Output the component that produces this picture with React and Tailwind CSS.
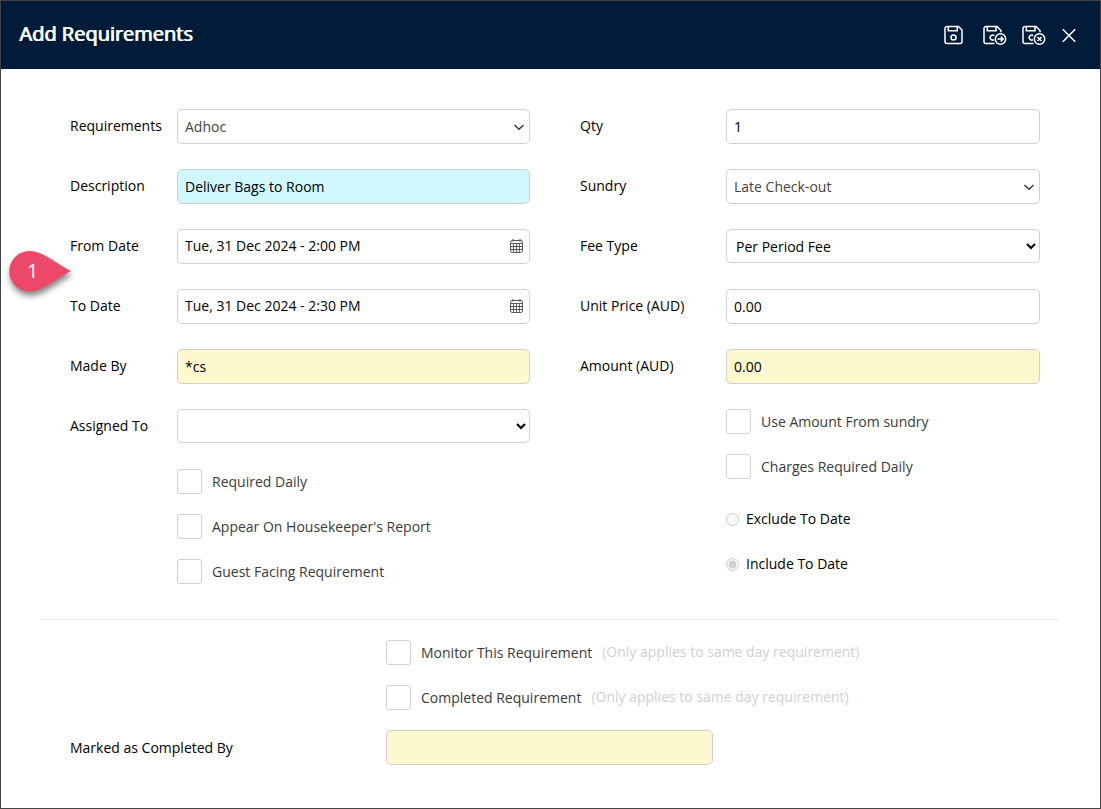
import React from 'react';
import clsx from 'clsx';

const fieldBase = 'w-full rounded-[5px] border border-[#d0d0d0] text-sm';
const leftLabel = 'w-[108px]';
const rightLabel = 'w-[147px]';

const Row = ({ label, htmlFor, labelWidth, children }) => (
  <div className="flex h-[35px] items-start">
    <label htmlFor={htmlFor} className={clsx('shrink-0 pl-px leading-[34px]', labelWidth)}>
      {label}
    </label>
    <div className="min-w-0 flex-1">{children}</div>
  </div>
);

const TextField = ({ id, value, tone = 'bg-white' }) => (
  <input id={id} type="text" defaultValue={value} className={clsx(fieldBase, 'block h-[35px] px-[7px]', tone)} />
);

const ComboField = ({ id, options }) => (
  <div className="relative">
    <select id={id} className={clsx(fieldBase, 'block h-[35px] appearance-none bg-white px-[7px] text-[#444]')}>
      {options.map(o => (
        <option key={o}>{o}</option>
      ))}
    </select>
    <svg
      viewBox="0 0 12 8"
      className="pointer-events-none absolute top-[14px] right-[5px] h-2 w-3"
      fill="none"
      stroke="#333"
      strokeWidth="1.4"
    >
      <path d="M1.5 2 6 6.200l4.500-4.200" />
    </svg>
  </div>
);

const NativeSelect = ({ id, options }) => (
  <select id={id} className={clsx(fieldBase, 'block h-[34px] bg-white pl-[5px]')}>
    {options.map(o => (
      <option key={o}>{o}</option>
    ))}
  </select>
);

const DateField = ({ id, value }) => (
  <div className={clsx(fieldBase, 'flex h-[35px] items-center bg-white pr-[6px] pb-px pl-[7px]')}>
    <input id={id} type="text" defaultValue={value} className="min-w-0 flex-1 outline-none" />
    <button type="button" aria-label="Open calendar">
      <svg viewBox="0 0 14 14" className="h-[14px] w-[14px]" fill="none" stroke="#555" strokeWidth="1">
        <rect x="1.5" y="1.5" width="12" height="12" rx="1.8" />
        <path d="M1.500 4.500h12M1.500 7.500h12M1.500 10.500h12" />
        <path d="M4.500 4.500v9M7.500 4.500v9M10.500 4.500v9" strokeWidth="0.9" />
        <path d="M4 0v2.500M11 0v2.500" strokeWidth="1.2" />
      </svg>
    </button>
  </div>
);

const CheckField = ({ label, hint }) => (
  <div className="flex h-[25px] items-center gap-[10px]">
    <label className="flex items-center gap-[10px] text-[#3a3a3a]">
      <input
        type="checkbox"
        className="h-[25px] w-[25px] shrink-0 appearance-none rounded-[3px] border border-[#d0d0d0] bg-white checked:bg-[#001c38]"
      />
      {label}
    </label>
    {hint && <span className="pb-[2px] text-[#d0d0d0]">{hint}</span>}
  </div>
);

const RadioField = ({ label, checked }) => (
  <label className="flex h-[25px] items-center gap-[7px]">
    <input type="radio" name="toDate" disabled defaultChecked={checked} className="h-[13px] w-[13px]" />
    <span className="pb-[2px]">{label}</span>
  </label>
);

// Floppy outline, the inner mark is a ring for save and an open ring for the badge variants
const SaveIcon = () => (
  <svg viewBox="0 0 24 24" className="h-6 w-6" fill="none" stroke="white" strokeWidth="1.5">
    <path d="M3 3.500h11.500L18 7v11.500a2 2 0 0 1-2 2H3a2 2 0 0 1-2-2v-13a2 2 0 0 1 2-2Z" />
    <path d="M4.300 3.500v4.300h8.900V3.500" />
    <circle cx="9.500" cy="14.500" r="2.500" />
  </svg>
);

const SaveBadgeIcon = ({ children }) => (
  <svg viewBox="0 0 24 24" className="h-6 w-6" fill="none" stroke="white" strokeWidth="1.5">
    <path d="M11.500 20.500H3a2 2 0 0 1-2-2v-13a2 2 0 0 1 2-2h11l4 4v1.800" />
    <path d="M4.300 3.500v4.300h8.700V3.500" />
    <path d="M11.300 12.600a2.500 2.500 0 1 0-.2 4" />
    <circle cx="17.500" cy="16" r="5.200" />
    {children}
  </svg>
);

const Header = () => (
  <header className="flex h-[68px] items-center justify-between bg-[#001c38] pr-[23px] pl-[18px] text-white">
    <h1 className="pb-[2px] text-xl leading-6 font-normal [text-shadow:1px_0_0_white]">Add Requirements</h1>
    <div className="flex items-center gap-[15px]">
      <button type="button" aria-label="Save">
        <SaveIcon />
      </button>
      <button type="button" aria-label="Save and continue">
        <SaveBadgeIcon>
          <path d="M14.500 16h5.500M17.700 13.500l2.500 2.500-2.500 2.500" />
        </SaveBadgeIcon>
      </button>
      <button type="button" aria-label="Save and close">
        <SaveBadgeIcon>
          <path d="m15.500 14 4 4M19.500 14l-4 4" />
        </SaveBadgeIcon>
      </button>
      <button type="button" aria-label="Close">
        <svg viewBox="0 0 16 16" className="h-4 w-4" fill="none" stroke="white" strokeWidth="1.5">
          <path d="M1.800 2.300l12.400 12.400M14.200 2.300 1.800 14.700" />
        </svg>
      </button>
    </div>
  </header>
);

const StepMarker = () => (
  <div className="absolute top-[248px] left-1 h-[54px] w-[72px]">
    <svg viewBox="0 0 72 54" className="h-full w-full drop-shadow-[1px_4px_3px_rgba(0,0,0,0.5)]">
      <path d="M66 22C50 14 38 2 24.500 2a20 20 0 1 0 0 40.500C38 42.500 50 30 66 22Z" fill="#ec4869" />
    </svg>
    <span className="absolute top-[12px] left-[22px] text-xl leading-5 font-medium text-white">1</span>
  </div>
);

const App = () => (
  <div className="relative min-h-screen border border-[#444] bg-white font-['Open_Sans',sans-serif] text-sm text-black">
    <Header />
    <form className="pt-10 pb-[43px]" onSubmit={e => e.preventDefault()}>
      <div className="grid grid-cols-2 gap-x-[49px] pr-[60px] pl-[68px]">
        {/* Requirement details */}
        <div className="flex flex-col gap-[25px]">
          <Row label="Requirements" htmlFor="requirements" labelWidth={leftLabel}>
            <ComboField id="requirements" options={['Adhoc']} />
          </Row>
          <Row label="Description" htmlFor="description" labelWidth={leftLabel}>
            <TextField id="description" value="Deliver Bags to Room" tone="bg-[#cff7fc]" />
          </Row>
          <Row label="From Date" htmlFor="fromDate" labelWidth={leftLabel}>
            <DateField id="fromDate" value="Tue, 31 Dec 2024 - 2:00 PM" />
          </Row>
          <Row label="To Date" htmlFor="toDate" labelWidth={leftLabel}>
            <DateField id="toDate" value="Tue, 31 Dec 2024 - 2:30 PM" />
          </Row>
          <Row label="Made By" htmlFor="madeBy" labelWidth={leftLabel}>
            <TextField id="madeBy" value="*cs" tone="bg-[#fef8cf]" />
          </Row>
          <Row label="Assigned To" htmlFor="assignedTo" labelWidth={leftLabel}>
            <NativeSelect id="assignedTo" options={['']} />
          </Row>
          <div className="flex flex-col gap-5 pl-[108px]">
            <CheckField label="Required Daily" />
            <CheckField label="Appear On Housekeeper's Report" />
            <CheckField label="Guest Facing Requirement" />
          </div>
        </div>

        {/* Charges */}
        <div className="flex flex-col gap-[25px]">
          <Row label="Qty" htmlFor="qty" labelWidth={rightLabel}>
            <TextField id="qty" value="1" />
          </Row>
          <Row label="Sundry" htmlFor="sundry" labelWidth={rightLabel}>
            <ComboField id="sundry" options={['Late Check-out']} />
          </Row>
          <Row label="Fee Type" htmlFor="feeType" labelWidth={rightLabel}>
            <NativeSelect id="feeType" options={['Per Period Fee']} />
          </Row>
          <Row label="Unit Price (AUD)" htmlFor="unitPrice" labelWidth={rightLabel}>
            <TextField id="unitPrice" value="0.00" />
          </Row>
          <Row label="Amount (AUD)" htmlFor="amount" labelWidth={rightLabel}>
            <TextField id="amount" value="0.00" tone="bg-[#fef8cf]" />
          </Row>
          <div className="flex flex-col gap-7 pl-[147px]">
            <div className="flex flex-col gap-5">
              <CheckField label="Use Amount From sundry" />
              <CheckField label="Charges Required Daily" />
            </div>
            <div className="flex flex-col gap-5">
              <RadioField label="Exclude To Date" />
              <RadioField label="Include To Date" checked />
            </div>
          </div>
        </div>
      </div>

      <hr className="mt-[35px] mr-10 mb-5 ml-[39px] border-[#ececec]" />

      {/* Monitoring */}
      <div className="flex flex-col gap-5 pr-[60px] pl-[68px]">
        <div className="flex flex-col gap-5 pl-[317px]">
          <CheckField label="Monitor This Requirement" hint="(Only applies to same day requirement)" />
          <CheckField label="Completed Requirement" hint="(Only applies to same day requirement)" />
        </div>
        <div className="grid grid-cols-[317px_1fr_1fr] items-center">
          <label htmlFor="completedBy" className="pl-px">
            Marked as Completed By
          </label>
          <TextField id="completedBy" value="" tone="bg-[#fef8cf]" />
        </div>
      </div>
    </form>
    <StepMarker />
  </div>
);

export default App;
